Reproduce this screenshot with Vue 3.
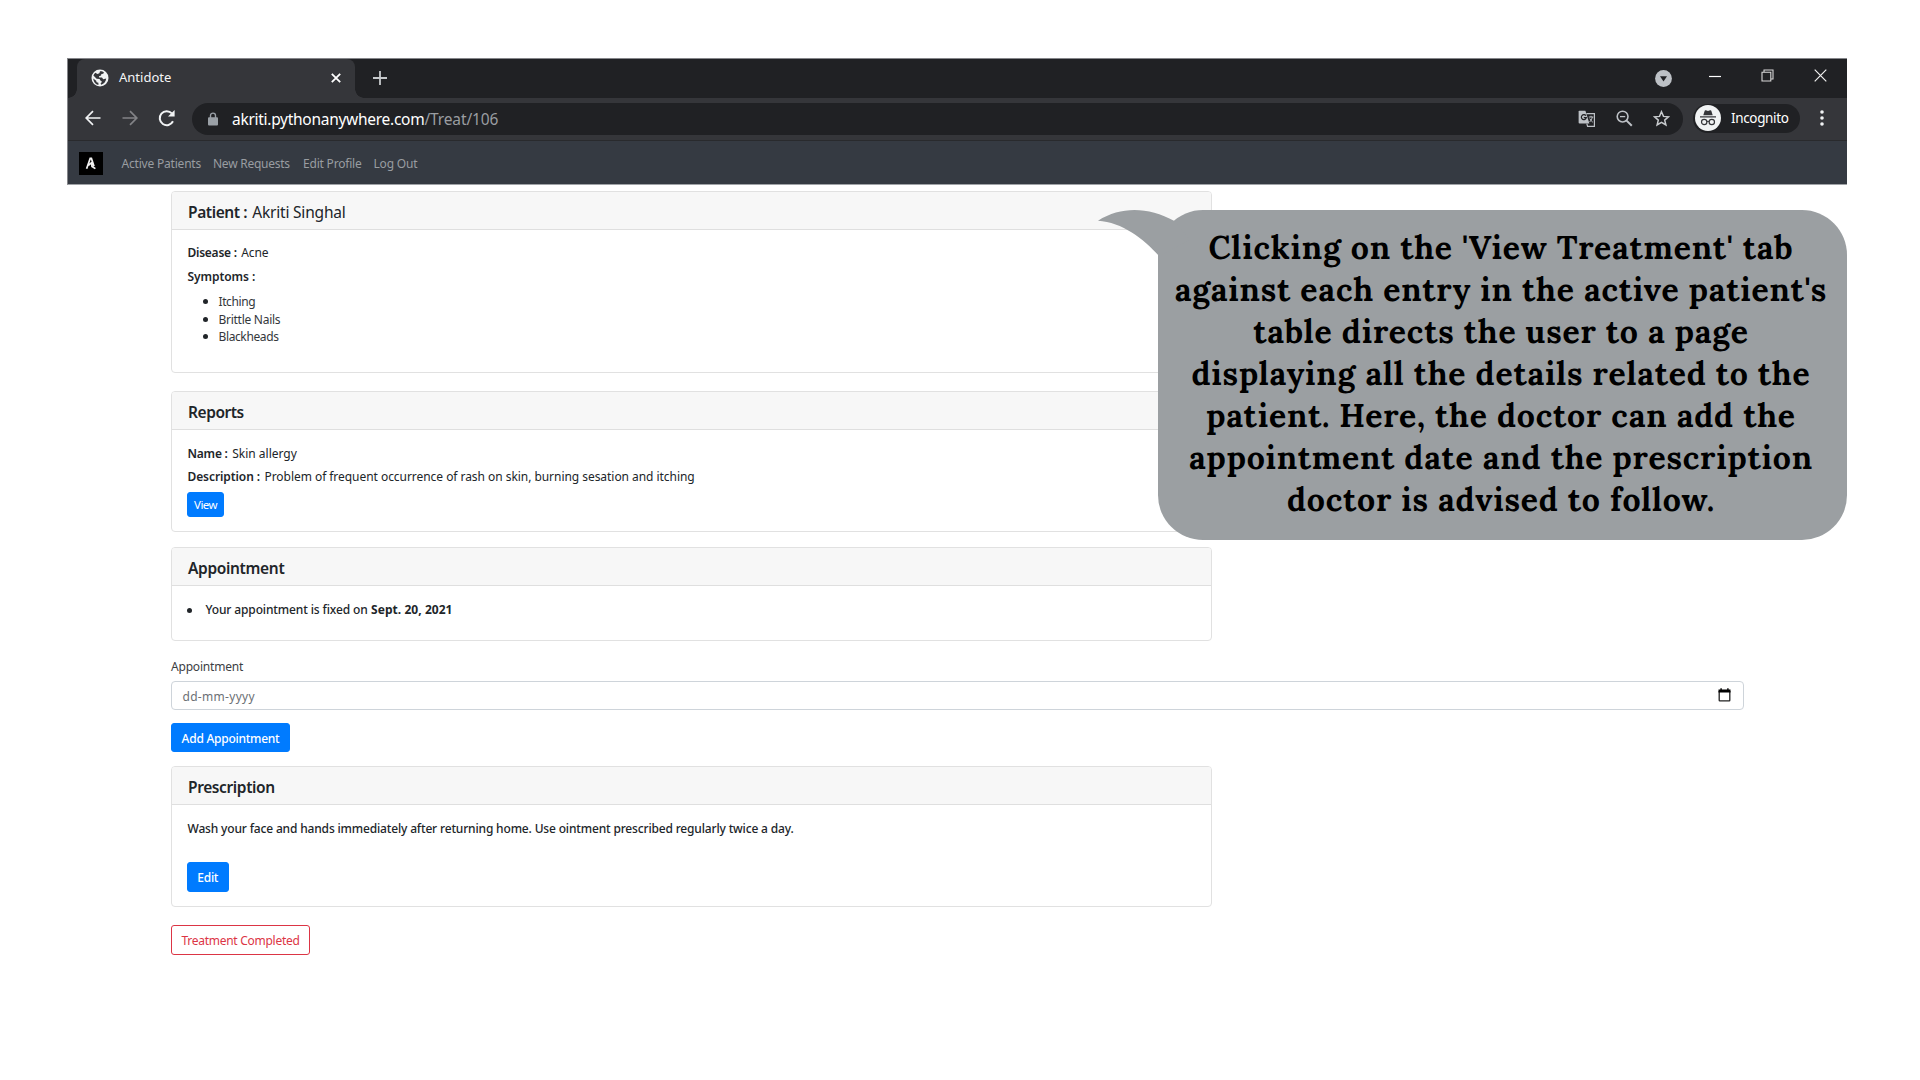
<script setup>
const navLinks = [
  { label: 'Active Patients', cls: 'nav-active' },
  { label: 'New Requests', cls: 'nav-new' },
  { label: 'Edit Profile', cls: 'nav-edit' },
  { label: 'Log Out', cls: 'nav-out' },
]
const symptoms = [
  { label: 'Itching', cls: 's-itch' },
  { label: 'Brittle Nails', cls: 's-nails' },
  { label: 'Blackheads', cls: 's-heads' },
]
const note = [
  "Clicking on the 'View Treatment' tab",
  "against each entry in the active patient's",
  'table directs the user to a page',
  'displaying all the details related to the',
  'patient. Here, the doctor can add the',
  'appointment date and the prescription',
  'doctor is advised to follow.',
]
</script>

<template>
  <div class="page">
    <div class="window">
      <header class="tabstrip">
        <div class="tab">
          <svg class="globe" width="18" height="18" viewBox="0 0 18 18">
            <circle cx="9" cy="9" r="8.5" fill="#f1f3f4" />
            <path d="M9 2.2C10.6 2 12 2.6 13 3.4L12.2 4.8 10.4 5 10 6.6 8 7.2 8.2 8.6 11 8.4 12.2 10.2 15.2 9.6C15 12.6 13 15 10.2 15.8L9.6 14.6 11 12.8 9.4 11.6 8.6 10 5.6 9.8 2.4 6.6C2.8 5.6 3.4 4.6 4.4 3.8L6.4 5 8.4 4.2Z M2.2 9.4 5.2 11.8 5.6 13.2 7.4 13.8 7.4 15.9C4.4 15.2 2.4 12.6 2.2 9.4Z" fill="#35363a" />
          </svg>
          <span class="tab-title">Antidote</span>
          <svg class="tab-x" width="10" height="10" viewBox="0 0 10 10"><path d="M.8 .8 9.2 9.2 M9.2 .8 .8 9.2" stroke="#fff" stroke-width="1.8" /></svg>
        </div>
        <svg class="plus" width="14" height="14" viewBox="0 0 14 14"><path d="M7 0V14M0 7H14" stroke="#c6c9cc" stroke-width="1.8" /></svg>
        <div class="controls">
          <svg class="drop" width="17" height="17" viewBox="0 0 17 17"><circle cx="8.5" cy="8.5" r="8.4" fill="#bdc1c6" /><path d="M5 6.3H12L8.5 11.6Z" fill="#202124" /></svg>
          <svg class="mini" width="12" height="12" viewBox="0 0 12 12"><path d="M0 6.5H12" stroke="#fff" stroke-width="1.2" /></svg>
          <svg class="rest" width="13" height="13" viewBox="0 0 13 13"><path d="M1 3.2H9.8V12H1Z M3 3V1H12V10H10" fill="none" stroke="#d8d8d8" stroke-width="1.1" /></svg>
          <svg width="13" height="13" viewBox="0 0 13 13"><path d="M.7 .7 12.3 12.3M12.3 .7 .7 12.3" stroke="#f0f0f0" stroke-width="1.2" /></svg>
        </div>
      </header>

      <div class="toolbar">
        <svg class="back" width="16" height="16" viewBox="0 0 16 16"><path d="M15.5 8H1.5M8 1.2 1.2 8 8 14.8" fill="none" stroke="#f1f3f4" stroke-width="1.7" /></svg>
        <svg class="fwd" width="16" height="16" viewBox="0 0 16 16"><path d="M.5 8H14.5M8 1.2 14.8 8 8 14.8" fill="none" stroke="#828386" stroke-width="1.7" /></svg>
        <svg class="reload" width="18" height="18" viewBox="0 0 18 18"><path d="M15 12.3 A7 7 0 1 1 13.9 4.4" fill="none" stroke="#f1f3f4" stroke-width="2" /><path d="M16.6 1V7.6H10Z" fill="#f1f3f4" /></svg>
        <div class="omnibox">
          <svg class="lock" width="10" height="14" viewBox="0 0 10 14"><path d="M2.5 6V3.6a2.5 2.5 0 0 1 5 0V6" fill="none" stroke="#9aa0a6" stroke-width="1.4" /><rect x="0" y="5.2" width="10" height="8.3" rx="1" fill="#9aa0a6" /></svg>
          <span class="host">akriti.pythonanywhere.com</span><span class="path">/Treat/106</span>
          <svg class="trans" width="18" height="18" viewBox="0 0 18 18">
            <path d="M1.4 .8H7.4L11.4 13.5H1.6Q.6 13.5 .6 12.5V1.6Q.6 .8 1.4 .8Z" fill="#bdc1c6" />
            <path d="M7.9 5.7A2.5 2.5 0 1 0 8.3 7.7H5.8" fill="none" stroke="#202124" stroke-width="1.2" />
            <path d="M8.4 3.6H16.4V16.4H9.6L8.8 13.6" fill="none" stroke="#bdc1c6" stroke-width="1.2" />
            <path d="M10.8 7H15.4M13 5.8V7M14.4 7Q13.8 10.2 11.6 12M11.8 8.6Q13 11 14.8 12.2" fill="none" stroke="#bdc1c6" />
          </svg>
          <svg class="mag" width="17" height="17" viewBox="0 0 17 17"><circle cx="6.6" cy="6.6" r="5.4" fill="none" stroke="#bdc1c6" stroke-width="1.6" /><path d="M10.6 10.6 15.8 15.8" stroke="#bdc1c6" stroke-width="2" /><path d="M4 6.6H9.2" stroke="#bdc1c6" stroke-width="1.3" /></svg>
          <svg class="star" width="17" height="17" viewBox="0 0 17 17"><path d="M8.5 1.7 10.5 6.4 15.5 6.8 11.7 10.1 12.9 15 8.5 12.4 4.1 15 5.3 10.1 1.5 6.8 6.5 6.4Z" fill="none" stroke="#c8cbce" stroke-width="1.5" /></svg>
        </div>
        <div class="incog">
          <svg width="26" height="26" viewBox="0 0 26 26"><circle cx="13" cy="13" r="13" fill="#f1f3f4" /><path d="M8.3 10.3 9.7 5.8Q10 5 10.9 5.3L13 5.9 15.1 5.3Q16 5 16.3 5.8L17.7 10.3Z M5 11.3H21V12.5H5Z" fill="#35363a" /><circle cx="9.2" cy="17" r="2.7" fill="none" stroke="#35363a" stroke-width="1.2" /><circle cx="16.8" cy="17" r="2.7" fill="none" stroke="#35363a" stroke-width="1.2" /><path d="M11.8 16.6Q13 15.8 14.2 16.6" fill="none" stroke="#35363a" stroke-width="1.1" /></svg>
          <span>Incognito</span>
        </div>
        <svg class="dots" width="4" height="16" viewBox="0 0 4 16"><circle cx="2" cy="2" r="1.8" fill="#f1f3f4" /><circle cx="2" cy="8" r="1.8" fill="#f1f3f4" /><circle cx="2" cy="14" r="1.8" fill="#f1f3f4" /></svg>
      </div>

      <nav class="navbar">
        <svg class="logo" width="24" height="23" viewBox="0 0 24 23"><rect width="24" height="23" fill="#000" /><path d="M7.6 16.8 11.2 6.4 12.4 6.4 15 14.2M9.4 13.4 12.6 10.6 13 14.4 16.4 16.6" fill="none" stroke="#f2f2f2" stroke-width="1.7" /></svg>
        <a v-for="l in navLinks" :key="l.label" :class="l.cls">{{ l.label }}</a>
      </nav>
    </div>

    <main class="content">
      <section class="card patient">
        <h5><b class="k-pat">Patient :</b><span class="v-pat">Akriti Singhal</span></h5>
        <div class="body">
          <p class="row"><b class="k-dis">Disease :</b><span class="v-dis">Acne</span></p>
          <p class="row"><b class="k-sym">Symptoms :</b></p>
          <ul class="symptoms">
            <li v-for="s in symptoms" :key="s.label"><i class="dot"></i><span :class="s.cls">{{ s.label }}</span></li>
          </ul>
        </div>
      </section>

      <section class="card reports">
        <h5><b class="k-rep">Reports</b></h5>
        <div class="body">
          <p class="row"><b class="k-name">Name :</b><span>Skin allergy</span></p>
          <p class="row"><b class="k-desc">Description :</b><span class="v-desc">Problem of frequent occurrence of rash on skin, burning sesation and itching</span></p>
          <button class="btn view"><span>View</span></button>
        </div>
      </section>

      <section class="card appt">
        <h5><b class="k-app">Appointment</b></h5>
        <div class="body">
          <p class="fixed"><i class="dot"></i><span class="v-fix">Your appointment is fixed on</span><b class="v-date">Sept. 20, 2021</b></p>
        </div>
      </section>

      <div class="form">
        <label>Appointment</label>
        <div class="input">
          <span>dd-mm-yyyy</span>
          <svg width="13" height="14" viewBox="0 0 13 14"><path d="M1.2 3V12.2Q1.2 12.8 1.8 12.8H11.2Q11.8 12.8 11.8 12.2V3" fill="none" stroke="#222" stroke-width="1.3" /><path d="M.5 1.6H12.5V4.6H.5ZM2.4 .2H3.8V2H2.4ZM9.2 .2H10.6V2H9.2Z" fill="#000" /></svg>
        </div>
        <button class="btn add"><span>Add Appointment</span></button>
      </div>

      <section class="card presc">
        <h5><b class="k-pre">Prescription</b></h5>
        <div class="body">
          <p class="row v-pre">Wash your face and hands immediately after returning home. Use ointment prescribed regularly twice a day.</p>
          <button class="btn edit"><span>Edit</span></button>
        </div>
      </section>

      <button class="btn done"><span>Treatment Completed</span></button>
    </main>

    <aside class="callout">
      <svg class="tail" width="94" height="50" viewBox="0 0 94 50"><path d="M0 10.7C24 -4 50 -3 76.5 11L92 30 61 46C46 29 24 12 0 10.7Z" fill="#9b9fa2" /></svg>
      <div class="note">
        <p v-for="line in note" :key="line">{{ line }}</p>
      </div>
    </aside>
  </div>
</template>

<style>
body { margin: 0; background: #fff; }
</style>

<style scoped>
.page { position: relative; width: 1920px; height: 1080px; box-sizing: border-box; padding: 58px 0 0 67px; overflow: hidden; background: #fff; color: #212529; font: 12px "Noto Sans", "Open Sans", sans-serif; }
.page * { box-sizing: border-box; }
p, h5, ul { margin: 0; padding: 0; }
svg { display: block; flex: none; }
span, b, a { white-space: nowrap; }

.window { width: 1780px; border-top: 1px solid #85868a; border-left: 1px solid #85868a; border-bottom: 1px solid #a0a3a7; height: 127px; }
.tabstrip { display: flex; height: 39px; background: #202124; align-items: center; }
.tab { position: relative; display: flex; align-items: center; width: 278px; height: 39px; margin-left: 9px; padding: 0 14px 2px; background: #35363a; border-radius: 8px 8px 0 0; }
.tab::before, .tab::after { content: ""; position: absolute; bottom: 0; width: 9px; height: 9px; }
.tab::before { left: -9px; background: radial-gradient(circle at 0 0, transparent 8.5px, #35363a 9px); }
.tab::after { right: -9px; background: radial-gradient(circle at 100% 0, transparent 8.5px, #35363a 9px); }
.tab-title { margin-left: 10px; padding-bottom: 1px; color: #f4f5f6; font-size: 13px; letter-spacing: 0; }
.tab-x { margin-left: auto; }
.plus { margin: 0 0 1px 18px; }
.controls { display: flex; align-items: center; margin-left: auto; margin-right: 20px; padding-bottom: 6px; height: 39px; }
.drop { margin: 5px 37px 0 0; }
.mini { margin-right: 40px; }
.rest { margin-right: 40px; }

.toolbar { display: flex; align-items: center; height: 43px; padding-bottom: 2px; background: #35363a; border-bottom: 1px solid #292a2d; }
.back { margin-left: 17px; }
.fwd { margin-left: 21px; }
.reload { margin-left: 20px; }
.omnibox { display: flex; align-items: center; width: 1491px; height: 32px; margin: 1px 0 0 16px; padding: 0 13px 0 16px; background: #202124; border-radius: 16px; }
.host { margin-left: 14px; color: #fff; font-size: 15.5px; letter-spacing: -.28px; }
.path { color: #9a9da1; font-size: 15.5px; letter-spacing: -.12px; }
.trans { margin-left: auto; }
.mag { margin-left: 20px; }
.star { margin-left: 20px; }
.incog { display: flex; align-items: center; width: 107px; height: 29px; margin-left: 10px; padding-left: 2px; border-radius: 15px; background: #202124; color: #fff; font-size: 13.5px; letter-spacing: -.35px; }
.incog span { margin-left: 10px; }
.dots { margin-left: 20px; }

.navbar { display: flex; align-items: center; height: 43px; padding-top: 1px; background: #353a42; color: #999da1; }
.logo { margin-left: 11px; }
.nav-active { margin-left: 18.5px; width: 91.5px; letter-spacing: -.2px; }
.nav-new { width: 90px; letter-spacing: -.25px; }
.nav-edit { width: 70.5px; letter-spacing: -.2px; }
.nav-out { letter-spacing: -.19px; }

.content { padding: 6px 0 0 104px; }
.card { display: flex; flex-direction: column; width: 1040.5px; border: 1px solid #e1e1e1; border-radius: 4px; background: #fff; }
.card h5 { display: flex; align-items: center; gap: 5px; height: 38px; padding: 2px 0 0 16px; background: #f7f7f7; border-bottom: 1px solid #dfdfdf; border-radius: 3px 3px 0 0; font-size: 15.5px; line-height: 24px; font-weight: 400; }
.card h5 b, .row b { font-weight: 600; }
.body { padding: 11px 15px 0; }
.row { display: flex; gap: 4.5px; height: 24px; padding-left: .5px; line-height: 24px; }
.patient { height: 182px; }
.k-pat { letter-spacing: -.4px; } .v-pat { letter-spacing: -.2px; }
.k-dis { letter-spacing: -.25px; } .v-dis { letter-spacing: -.15px; }
.k-sym { letter-spacing: -.07px; }
.symptoms { list-style: none; padding: 4px 0 0 16px; }
.symptoms li { display: flex; align-items: center; height: 17.6px; line-height: 17.6px; color: #34373b; }
.dot { width: 5px; height: 5px; border-radius: 50%; background: #212529; }
.symptoms .dot { margin-right: 10.5px; }
.s-itch { letter-spacing: -.4px; } .s-nails { letter-spacing: -.27px; } .s-heads { letter-spacing: -.38px; }

.reports { height: 141px; margin-top: 18px; }
.reports .body { padding-top: 12px; }
.reports .row + .row { margin-top: -1px; }
.k-rep { letter-spacing: -.45px; }
.k-name { letter-spacing: -.22px; } .k-desc { letter-spacing: -.09px; }
.v-desc { letter-spacing: -.045px; }

.btn { display: flex; align-items: center; justify-content: center; padding: 0; border: 1px solid #007bff; border-radius: 3px; background: #007bff; color: #fff; font: 500 12px "Noto Sans", "Open Sans", sans-serif; height: 29px; }
.view { width: 37px; height: 25px; margin-top: 3px; font-size: 11.5px; font-weight: 400; letter-spacing: -.6px; }

.appt { height: 94px; margin-top: 15px; }
.k-app { letter-spacing: -.34px; }
.appt .body { padding-top: 12px; }
.fixed { display: flex; align-items: center; height: 24px; line-height: 24px; font-weight: 500; }
.fixed .dot { margin-right: 13.5px; }
.v-fix { letter-spacing: -.13px; } .v-date { margin-left: 3.5px; font-weight: 700; letter-spacing: .05px; }

.form { display: flex; flex-direction: column; align-items: flex-start; margin-top: 16px; }
label { line-height: 20px; letter-spacing: -.2px; color: #3c4044; }
.input { display: flex; align-items: center; justify-content: space-between; width: 1573px; height: 29px; margin-top: 4px; padding: 2px 12.5px 0 10.5px; border: 1px solid #ced4da; border-radius: 4px; color: #6c7075; letter-spacing: .3px; }
.input svg { margin-top: -3px; }
.add { width: 119px; margin-top: 13px; }
.add span { letter-spacing: -.26px; padding-top: 1px; }

.presc { height: 141px; margin-top: 14px; }
.presc .body { padding-top: 12px; }
.k-pre { letter-spacing: -.39px; }
.v-pre { font-weight: 500; letter-spacing: -.163px; white-space: nowrap; }
.edit { width: 41.5px; height: 30px; margin-top: 21px; }
.edit span { letter-spacing: -.3px; padding-top: 1px; }
.done { width: 139px; height: 29.5px; margin-top: 18px; border-color: #dc3545; background: #fff; color: #dc3545; font-weight: 400; }
.done span { letter-spacing: -.27px; padding-top: 1px; }

.callout { position: absolute; left: 1158px; top: 210px; width: 689px; height: 329.5px; border-radius: 45px; background: #9b9fa2; }
.tail { position: absolute; left: -60px; top: 0; overflow: visible; }
.note { position: relative; display: flex; flex-direction: column; align-items: center; padding-top: 17px; color: #000; font: 700 32px/42px Lora, "Liberation Serif", serif; letter-spacing: .79px; }
.note p { height: 42px; white-space: nowrap; margin-right: 3px; }
</style>
